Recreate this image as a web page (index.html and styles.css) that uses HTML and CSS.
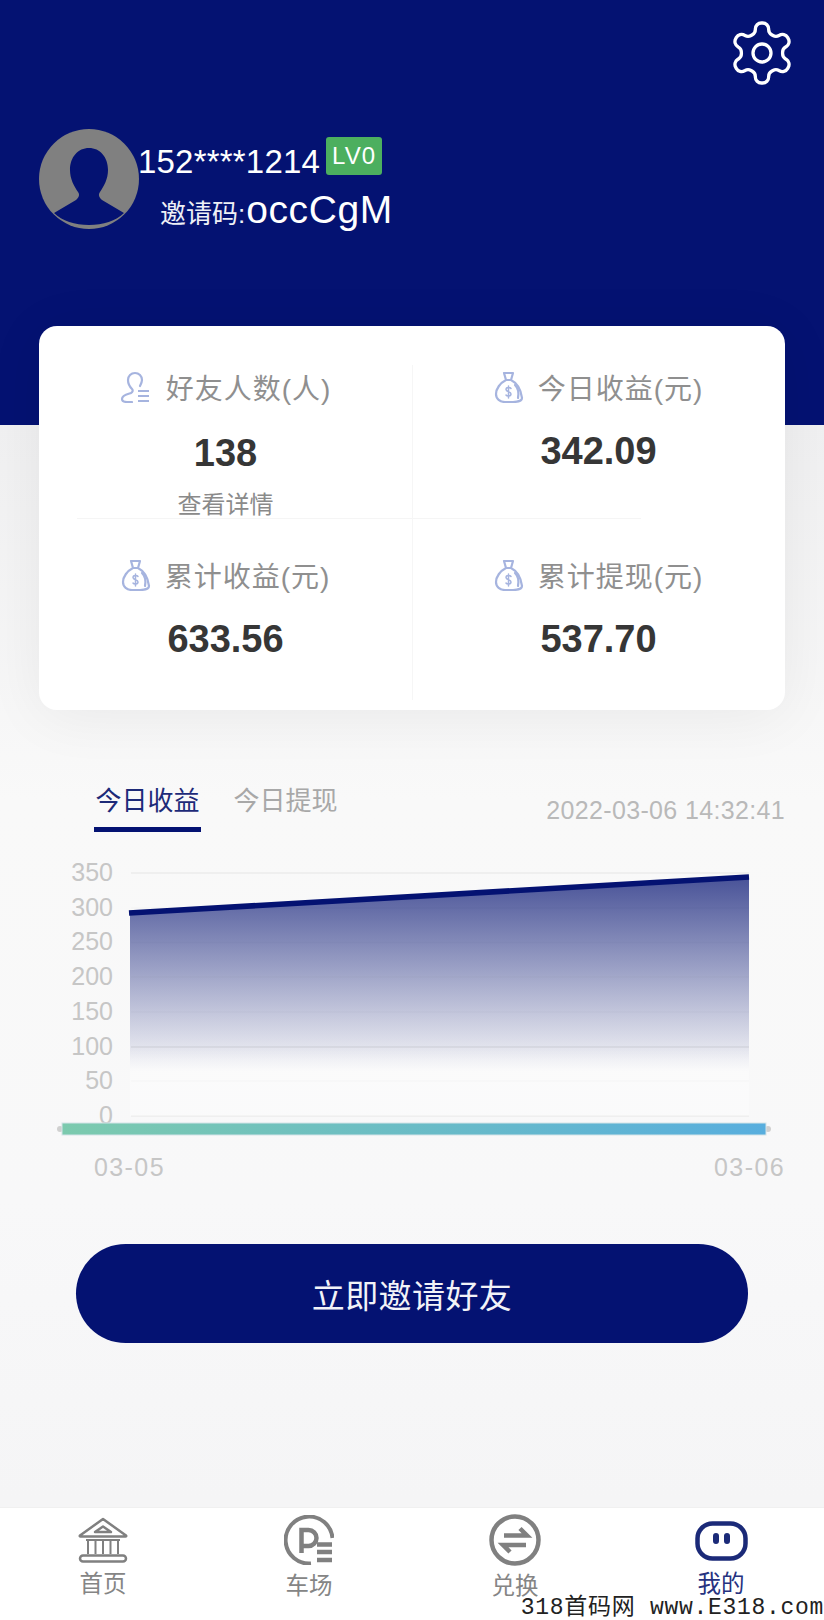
FILE: index.html
```html
<!DOCTYPE html>
<html lang="zh-CN">
<head>
<meta charset="utf-8">
<title>我的</title>
<link rel="stylesheet" href="styles.css">
</head>
<body>
<div class="page">
  <header class="hero">
    <div class="hero-top">
      <svg class="gear" viewBox="2 2 20 20" aria-hidden="true"><path d="M12.22 2h-.44a2 2 0 0 0-2 2v.18a2 2 0 0 1-1 1.73l-.43.25a2 2 0 0 1-2 0l-.15-.08a2 2 0 0 0-2.73.73l-.22.38a2 2 0 0 0 .73 2.73l.15.1a2 2 0 0 1 1 1.72v.51a2 2 0 0 1-1 1.74l-.15.09a2 2 0 0 0-.73 2.73l.22.38a2 2 0 0 0 2.73.73l.15-.08a2 2 0 0 1 2 0l.43.25a2 2 0 0 1 1 1.73V20a2 2 0 0 0 2 2h.44a2 2 0 0 0 2-2v-.18a2 2 0 0 1 1-1.73l.43-.25a2 2 0 0 1 2 0l.15.08a2 2 0 0 0 2.73-.73l.22-.39a2 2 0 0 0-.73-2.73l-.15-.08a2 2 0 0 1-1-1.74v-.5a2 2 0 0 1 1-1.74l.15-.09a2 2 0 0 0 .73-2.73l-.22-.38a2 2 0 0 0-2.73-.73l-.15.08a2 2 0 0 1-2 0l-.43-.25a2 2 0 0 1-1-1.73V4a2 2 0 0 0-2-2z"/><circle cx="12" cy="12" r="3"/></svg>
    </div>
    <div class="profile">
      <svg class="avatar" viewBox="0 0 100 100" aria-hidden="true">
        <circle cx="50" cy="50" r="50" fill="#808080"/>
        <path d="M50 19c-11 0-19 9-19 22 0 9 4 16 8 22 2 3 1 5-2 8L15 84c8 8 21 12 35 12s27-4 35-12L63 71c-3-3-4-5-2-8 4-6 8-13 8-22 0-13-8-22-19-22z" fill="#041272"/>
      </svg>
      <div class="profile-text">
        <div class="name-row"><span class="phone">152****1214</span><span class="level">LV0</span></div>
        <div class="invite"><span class="invite-label">邀请码:</span><span class="invite-code">occCgM</span></div>
      </div>
    </div>
  </header>

  <section class="stats">
    <i class="rule-h"></i>
    <i class="rule-v"></i>
    <div class="stat stat-first">
      <div class="stat-head stat-head-wide">
        <svg class="stat-icon" viewBox="0 0 30 32" aria-hidden="true"><path d="M11 22c-3 1-9 2-9 6 0 2 2 3 5 3h5M11 22c2-1 2-3 1-4-2-2-4-5-4-9 0-4 3-7 7-7s7 3 7 7c0 2-1 4-2 6"/><path class="bars" d="M18 20h11M18 25h11M18 30h11"/></svg>
        <span>好友人数(人)</span>
      </div>
      <div class="stat-num stat-num-low">138</div>
      <div class="stat-link">查看详情</div>
    </div>
    <div class="stat stat-first">
      <div class="stat-head">
        <svg class="stat-icon" viewBox="0 0 30 32" aria-hidden="true"><path d="M10 2h9l-2 7h-5zM12 9C6 12 2 18 2 23c0 5 4 8 9 8h8c6 0 9-2 9-4M17 9c6 3 10 10 11 18"/><path d="M21 14c3 3 4 8 3 13"/><path class="dollar" d="M17 17.500c-1-1.500-5-1.500-5 1 0 3 5 1.500 5 4.500 0 2.500-4 2.500-5 1M14.500 15v12"/></svg>
        <span>今日收益(元)</span>
      </div>
      <div class="stat-num">342.09</div>
    </div>
    <div class="stat">
      <div class="stat-head">
        <svg class="stat-icon" viewBox="0 0 30 32" aria-hidden="true"><path d="M10 2h9l-2 7h-5zM12 9C6 12 2 18 2 23c0 5 4 8 9 8h8c6 0 9-2 9-4M17 9c6 3 10 10 11 18"/><path d="M21 14c3 3 4 8 3 13"/><path class="dollar" d="M17 17.500c-1-1.500-5-1.500-5 1 0 3 5 1.500 5 4.500 0 2.500-4 2.500-5 1M14.500 15v12"/></svg>
        <span>累计收益(元)</span>
      </div>
      <div class="stat-num">633.56</div>
    </div>
    <div class="stat">
      <div class="stat-head">
        <svg class="stat-icon" viewBox="0 0 30 32" aria-hidden="true"><path d="M10 2h9l-2 7h-5zM12 9C6 12 2 18 2 23c0 5 4 8 9 8h8c6 0 9-2 9-4M17 9c6 3 10 10 11 18"/><path d="M21 14c3 3 4 8 3 13"/><path class="dollar" d="M17 17.500c-1-1.500-5-1.500-5 1 0 3 5 1.500 5 4.500 0 2.500-4 2.500-5 1M14.500 15v12"/></svg>
        <span>累计提现(元)</span>
      </div>
      <div class="stat-num">537.70</div>
    </div>
  </section>

  <section class="trend">
    <div class="tabs">
      <div class="tab tab-active">今日收益</div>
      <div class="tab">今日提现</div>
      <div class="stamp">2022-03-06 14:32:41</div>
    </div>
    <svg class="chart" viewBox="0 840 824 340" aria-label="今日收益">
      <defs>
        <linearGradient id="area" gradientUnits="userSpaceOnUse" x1="0" y1="877" x2="0" y2="1072">
          <stop offset="0" stop-color="#041272" stop-opacity=".72"/>
          <stop offset="1" stop-color="#041272" stop-opacity="0"/>
        </linearGradient>
        <linearGradient id="foot" x1="0" y1="0" x2="0" y2="1">
          <stop offset="0" stop-color="#fff" stop-opacity="0"/>
          <stop offset=".35" stop-color="#fff" stop-opacity=".4"/>
          <stop offset="1" stop-color="#fff" stop-opacity=".3"/>
        </linearGradient>
        <linearGradient id="zoom" x1="0" y1="0" x2="1" y2="0">
          <stop offset="0" stop-color="#7ccaae"/>
          <stop offset="1" stop-color="#58aede"/>
        </linearGradient>
      </defs>
      <path class="grid" d="M131 873H749M131 1047H749M131 1116H749"/>
      <polygon points="130,913 749,877 749,1116 130,1116" fill="url(#area)"/>
      <rect x="130" y="1050" width="619" height="66" fill="url(#foot)"/>
      <path class="grid-over" d="M131 908H749M131 942.500H749M131 977H749M131 1012H749M131 1047H749M131 1081H749"/>
      <path class="series" d="M129 913L749 877"/>
      <g class="axis axis-y">
        <text x="113" y="881">350</text>
        <text x="113" y="916">300</text>
        <text x="113" y="950">250</text>
        <text x="113" y="985">200</text>
        <text x="113" y="1020">150</text>
        <text x="113" y="1055">100</text>
        <text x="113" y="1089">50</text>
        <text x="113" y="1124">0</text>
      </g>
      <circle class="handle" cx="60" cy="1129" r="3"/>
      <circle class="handle" cx="768" cy="1129" r="3"/>
      <rect class="zoom-bar" x="62" y="1123" width="704" height="12" fill="url(#zoom)"/>
      <g class="axis axis-x">
        <text x="94" y="1176">03-05</text>
        <text x="785" y="1176" text-anchor="end">03-06</text>
      </g>
    </svg>
  </section>

  <button class="cta" type="button">立即邀请好友</button>

  <nav class="tabbar">
    <div class="nav-item">
      <svg class="nav-icon nav-bank" viewBox="0 0 50 46" aria-hidden="true">
        <path d="M2 18.500 25 2l23 16.500c.5.500.2 1-.5 1h-45c-.7 0-1-.5-.5-1z"/>
        <path d="M25 9.500l8 5.500H17z"/>
        <path class="cols" d="M8 23h34M10 23v14M17.500 23v14M25 23v14M32.500 23v14M40 23v14"/>
        <rect x="2" y="38.500" width="46" height="6" rx="3"/>
      </svg>
      <span class="nav-label">首页</span>
    </div>
    <div class="nav-item">
      <svg class="nav-icon nav-park" viewBox="0 0 50 50" aria-hidden="true">
        <path d="M48.500 23A23.500 23.500 0 1 0 27 48.500"/>
        <path class="letter" d="M17.500 38V15h7a8 8 0 0 1 0 16h-7"/>
        <path class="bars" d="M33 29.500h15M33 37h15M33 45h15"/>
      </svg>
      <span class="nav-label nav-label-low">车场</span>
    </div>
    <div class="nav-item">
      <svg class="nav-icon nav-swap" viewBox="0 0 52 52" aria-hidden="true">
        <circle cx="26" cy="26" r="23.500"/>
        <path d="M15 21.500h23l-7-7M37 31H14l7 7"/>
      </svg>
      <span class="nav-label nav-label-low">兑换</span>
    </div>
    <div class="nav-item nav-item-active">
      <svg class="nav-icon nav-mine" viewBox="0 0 53 52" aria-hidden="true">
        <rect x="2.500" y="8.500" width="48" height="35" rx="15"/>
        <path class="eyes" d="M21 21v5M32 21v5"/>
      </svg>
      <span class="nav-label">我的</span>
    </div>
  </nav>

  <div class="watermark">318首码网 www.E318.com</div>
</div>
</body>
</html>
```

FILE: styles.css
```css
* {
  box-sizing: border-box;
}

html,
body {
  margin: 0;
  padding: 0;
}

body {
  font-family: "Liberation Sans", "Noto Sans CJK SC", sans-serif;
  background: #f7f7f8;
}

.page {
  position: relative;
  display: flex;
  flex-direction: column;
  width: 824px;
  height: 1620px;
  overflow: hidden;
  background: linear-gradient(#f0f0f1 425px, #f9f9f9 800px, #f8f8f9 1200px, #f5f5f6 1500px);
}

/* header */
.hero {
  flex: none;
  height: 425px;
  padding: 23px 32px 0 39px;
  background: #041272;
  color: #fff;
}

.hero-top {
  display: flex;
  justify-content: flex-end;
}

.gear {
  width: 60px;
  height: 60px;
  fill: none;
  stroke: #fff;
  stroke-width: 1.100;
  stroke-linejoin: round;
  overflow: visible;
}

.profile {
  display: flex;
  margin-top: 46px;
}

.avatar {
  flex: none;
  width: 100px;
  height: 100px;
}

.profile-text {
  display: flex;
  flex-direction: column;
  margin-top: 8px;
}

.name-row {
  display: flex;
  align-items: flex-start;
  gap: 6px;
  margin-left: -1px;
}

.phone {
  margin-top: 6px;
  font-size: 33px;
  line-height: 38px;
  letter-spacing: .2px;
  white-space: nowrap;
}

.level {
  width: 56px;
  height: 38px;
  border-radius: 3px;
  background: #4caf5f;
  font-size: 24px;
  line-height: 38px;
  text-align: center;
  letter-spacing: 1px;
}

.invite {
  display: flex;
  align-items: baseline;
  margin: 7px 0 0 21px;
  white-space: nowrap;
}

.invite-label {
  font-size: 26px;
  line-height: 44px;
  color: #eef0f6;
}

.invite-code {
  margin-left: 1px;
  font-size: 39px;
  line-height: 44px;
  letter-spacing: .6px;
}

/* stat card */
.stats {
  position: relative;
  flex: none;
  display: grid;
  grid-template-columns: 1fr 1fr;
  grid-template-rows: 192px 192px;
  width: 746px;
  height: 384px;
  margin: -99px 0 0 39px;
  border-radius: 18px;
  background: #fff;
  box-shadow: 0 6px 60px rgba(0, 0, 0, .06);
}

.rule-h {
  position: absolute;
  left: 38px;
  top: 192px;
  width: 564px;
  height: 1px;
  background: #f5f5f5;
}

.rule-v {
  position: absolute;
  left: 373px;
  top: 39px;
  width: 1px;
  height: 335px;
  background: #f6f6f6;
}

.stat {
  position: relative;
  display: flex;
  flex-direction: column;
  align-items: center;
  padding-top: 37px;
}

.stat-first {
  padding-top: 41px;
}

.stat-head {
  display: flex;
  align-items: center;
  gap: 14px;
  height: 40px;
  font-size: 28px;
  letter-spacing: 1px;
  color: #8f8f8f;
  white-space: nowrap;
}

.stat-head-wide {
  gap: 16px;
}

.stat-icon {
  flex: none;
  width: 30px;
  height: 32px;
  fill: none;
  stroke: #a6b4df;
  stroke-width: 2.200;
  stroke-linecap: round;
  stroke-linejoin: round;
}

.stat-icon .bars {
  stroke-width: 2.200;
  stroke-linecap: butt;
}

.stat-icon .dollar {
  stroke-width: 1.500;
}

.stat-num {
  margin-top: 22px;
  font-size: 38px;
  line-height: 44px;
  font-weight: 700;
  color: #363636;
}

.stat-num-low {
  margin-top: 24px;
}

.stat-link {
  margin-top: 14px;
  font-size: 24px;
  line-height: 32px;
  color: #8a8a8a;
}

/* trend */
.trend {
  flex: none;
  margin-top: 70px;
}

.tabs {
  display: flex;
  height: 52px;
  padding: 0 39px 0 94px;
}

.tab {
  width: 107px;
  margin-right: 31px;
  font-size: 26px;
  line-height: 42px;
  text-align: center;
  color: #a8a8a8;
}

.tab-active {
  border-bottom: 5px solid #041272;
  color: #1d2a78;
}

.stamp {
  margin: 14px 0 0 auto;
  font-size: 25px;
  line-height: 32px;
  letter-spacing: .35px;
  color: #b9b9b9;
  white-space: nowrap;
}

.chart {
  display: block;
  width: 824px;
  height: 340px;
  margin-top: 8px;
}

.grid {
  fill: none;
  stroke: #ececec;
  stroke-width: 1.500;
}

.grid-over {
  fill: none;
  stroke: rgba(0, 0, 40, .018);
  stroke-width: 1.500;
}

.series {
  fill: none;
  stroke: #041272;
  stroke-width: 5.500;
}

.axis text {
  font-size: 25px;
  fill: #c6c6c6;
}

.axis-y text {
  text-anchor: end;
}

.axis-x text {
  letter-spacing: 1.400px;
}

.handle {
  fill: #d0d0d0;
}

.zoom-bar {
  stroke: #d3e3e8;
  stroke-width: 1;
}

/* invite button */
.cta {
  flex: none;
  display: block;
  width: 672px;
  height: 99px;
  margin: 64px 0 0 76px;
  border: 0;
  border-radius: 50px;
  background: #041272;
  color: #f2f3f8;
  font-family: inherit;
  font-size: 33px;
  letter-spacing: .4px;
}

/* bottom nav */
.tabbar {
  flex: none;
  display: grid;
  grid-template-columns: repeat(4, 1fr);
  height: 113px;
  margin-top: auto;
  padding-top: 7px;
  background: #fff;
  border-top: 1px solid #f0f0f0;
}

.nav-item {
  display: flex;
  flex-direction: column;
  align-items: center;
}

.nav-icon {
  display: block;
  flex: none;
  fill: none;
  stroke: #808080;
}

.nav-bank {
  width: 50px;
  height: 46px;
  margin-top: 2px;
  margin-bottom: 4px;
  stroke-width: 2.500;
  stroke-linejoin: round;
}

.nav-bank .cols {
  stroke-width: 2;
}

.nav-park {
  width: 50px;
  height: 50px;
  stroke-width: 4;
}

.nav-park .letter {
  stroke-width: 4.500;
}

.nav-park .bars {
  stroke-width: 4.500;
}

.nav-swap {
  width: 52px;
  height: 52px;
  margin-top: -1px;
  margin-bottom: -1px;
  stroke-width: 4.500;
}

.nav-mine {
  width: 53px;
  height: 52px;
  stroke: #1b2a78;
  stroke-width: 4.500;
}

.nav-mine .eyes {
  stroke-width: 6;
  stroke-linecap: round;
}

.nav-label {
  margin-top: 4px;
  font-size: 23.500px;
  line-height: 26px;
  color: #858585;
}

.nav-label-low {
  margin-top: 8px;
}

.nav-item-active .nav-label {
  color: #26327f;
}

/* watermark overlay */
.watermark {
  position: absolute;
  right: 0;
  bottom: 0;
  font-family: "Liberation Mono", "Noto Sans CJK SC", monospace;
  font-size: 23px;
  line-height: 24px;
  letter-spacing: .7px;
  color: #222;
  white-space: nowrap;
}
```
